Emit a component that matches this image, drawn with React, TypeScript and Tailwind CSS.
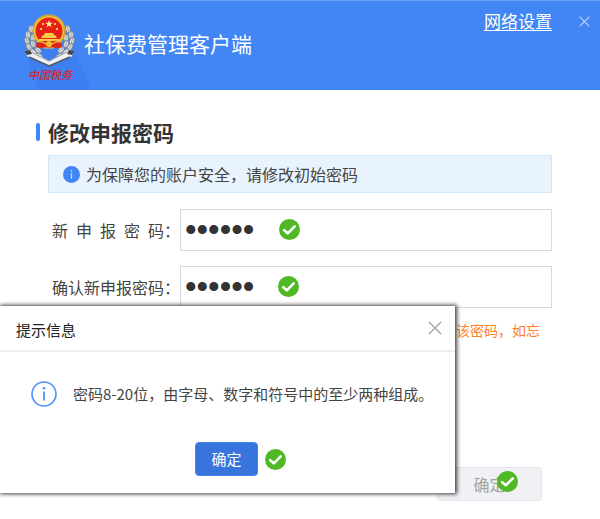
import { useState } from "react";

const laurel = [
  [11, 20, 10],
  [8, 26, -5],
  [7, 32, -20],
  [9, 38, -35],
  [13, 43, -50],
  [19, 47, -65],
  [13, 29, 0],
  [13, 35, -20],
  [18, 41, -45],
];

const fieldClass =
  "h-[42px] w-full border border-[#d6dbe2] bg-white pl-1 font-['Liberation_Sans',sans-serif] text-[33px] text-[#333333] outline-none";

export default function App() {
  const [password, setPassword] = useState("abc123");
  const [confirm, setConfirm] = useState("abc123");

  return (
    <div className="relative min-h-screen bg-white font-['Noto_Sans_CJK_SC',sans-serif] text-[#444444]">
      <header className="relative flex h-[90px] items-start justify-between border-t border-[#6a9ff5] bg-[#4285f4] text-white">
        <svg className="absolute top-0 left-0 h-full w-[100px]" viewBox="0 0 100 89" aria-hidden="true">
          <path d="M25 50 L70 42 L92 89 L38 89 Z" fill="#3d7ff0" />
        </svg>
        <div className="relative flex items-center gap-2 pt-2 pl-5">
          <Emblem />
          <h1 className="pb-1 text-[21px] leading-6">社保费管理客户端</h1>
        </div>
        <div className="relative flex items-center gap-6 pt-2 pr-2">
          <a href="#network" className="text-[17px] leading-6 underline underline-offset-2">
            网络设置
          </a>
          <button type="button" aria-label="关闭窗口" className="flex size-4 items-center justify-center text-[#c8d8f5]">
            <CloseIcon size={13} />
          </button>
        </div>
      </header>

      <main className="px-12 pt-7">
        <div className="-ml-3 flex items-center gap-2">
          <span className="h-[18px] w-1 rounded-sm bg-[#4285f4]" />
          <h2 className="text-[21px] leading-7 font-bold text-[#333333]">修改申报密码</h2>
        </div>

        <div className="mt-[9px] flex h-[38px] items-center gap-[6px] border border-[#d3e6fb] bg-[#e9f3fe] px-[14px]">
          <svg width="17" height="17" viewBox="0 0 17 17" aria-hidden="true">
            <circle cx="8.5" cy="8.5" r="8.5" fill="#4285f4" />
            <path d="M8.5 7v6M8.5 4v1.4" stroke="#c9dcfb" strokeWidth="1.2" />
          </svg>
          <p className="text-base leading-6">为保障您的账户安全，请修改初始密码</p>
        </div>

        <form className="mt-4">
          <div className="flex items-center">
            <label htmlFor="password" className="flex w-[132px] shrink-0 pl-1 text-base whitespace-nowrap">
              <span className="w-[113px] [text-align-last:justify]">新 申 报 密 码</span>：
            </label>
            <div className="relative flex-1">
              <input
                id="password"
                type="password"
                value={password}
                onChange={(e) => setPassword(e.target.value)}
                className={fieldClass}
              />
              <CheckBadge className="absolute top-[10px] left-[99px]" />
            </div>
          </div>

          <div className="mt-[15px] flex items-center">
            <label htmlFor="confirm" className="flex w-[132px] shrink-0 pl-1 text-base whitespace-nowrap">
              <span className="w-[113px] [text-align-last:justify]">确认新申报密码</span>：
            </label>
            <div className="relative flex-1">
              <input
                id="confirm"
                type="password"
                value={confirm}
                onChange={(e) => setConfirm(e.target.value)}
                className={fieldClass}
              />
              <CheckBadge className="absolute top-[10px] left-[98px]" />
            </div>
          </div>

          <p className="mt-[10px] pr-3 text-right text-sm leading-6 text-[#ff7f27]">于该密码，如忘</p>

          <div className="mt-[125px] flex justify-end pr-[10px]">
            <div className="relative">
              <button
                type="submit"
                disabled
                className="h-[34px] w-[105px] rounded-sm border border-[#e3e5ea] bg-[#eff1f5] text-base text-[#a3a3a3]"
              >
                确定
              </button>
              <CheckBadge className="absolute top-1 left-[60px]" />
            </div>
          </div>
        </form>
      </main>

      <section
        role="dialog"
        aria-labelledby="dialog-title"
        className="absolute top-[306px] left-0 w-[455px] max-w-full bg-white pb-[17px] shadow-[1px_0_4px_1px_rgba(0,0,0,0.75)]"
      >
        <div className="flex h-[46px] items-center justify-between border-b-2 border-[#efefef] pt-1 pr-3 pl-4">
          <h3 id="dialog-title" className="text-[15px] text-[#222222]">
            提示信息
          </h3>
          <button type="button" aria-label="关闭" className="mb-1 flex size-4 items-center justify-center text-[#a0a0a0]">
            <CloseIcon size={16} />
          </button>
        </div>
        <div className="flex items-center gap-4 pt-[29px] pl-[31px]">
          <svg width="26" height="26" viewBox="0 0 26 26" fill="none" aria-hidden="true">
            <circle cx="13" cy="13" r="12" stroke="#4d8ff7" strokeWidth="1.6" />
            <path d="M13 10.5v9" stroke="#4d8ff7" strokeWidth="1.8" />
            <circle cx="13" cy="7.2" r="1.3" fill="#4d8ff7" />
          </svg>
          <p className="text-[15px] whitespace-nowrap">密码8-20位，由字母、数字和符号中的至少两种组成。</p>
        </div>
        <div className="flex items-center justify-center gap-[7px] pt-[35px] pl-[26px]">
          <button
            type="button"
            className="h-[34px] w-[63px] rounded border border-[#4285f4] bg-[#3775dc] text-[15px] text-white"
          >
            确定
          </button>
          <CheckBadge />
        </div>
      </section>
    </div>
  );
}

function CloseIcon({ size }: { size: number }) {
  return (
    <svg width={size} height={size} viewBox="0 0 16 16" fill="none" stroke="currentColor" strokeWidth="1.3">
      <path d="M2 2l12 12M14 2L2 14" />
    </svg>
  );
}

function CheckBadge({ className = "" }: { className?: string }) {
  return (
    <svg className={className} width="21" height="21" viewBox="0 0 21 21" fill="none" aria-hidden="true">
      <circle cx="10.5" cy="10.5" r="10.5" fill="#4fb925" />
      <path
        d="M5.2 11.2l3.6 3.1 6.9-6.9"
        stroke="#ffffff"
        strokeWidth="2.6"
        strokeLinecap="round"
        strokeLinejoin="round"
      />
    </svg>
  );
}

// National emblem with laurel and ribbon, lettering below
function Emblem() {
  return (
    <svg width="56" height="72" viewBox="0 0 56 72" fill="none" aria-hidden="true">
      {[1, -1].map((side) => (
        <g key={side} transform={side === 1 ? undefined : "translate(59 0) scale(-1 1)"}>
          {laurel.map(([x, y, angle]) => (
            <g key={`${x}-${y}`} transform={`translate(${x} ${y}) rotate(${angle})`}>
              <ellipse rx="2.5" ry="3.8" fill="#d5d9dc" stroke="#6b7580" strokeWidth="0.7" />
              <path d="M0-3v6" stroke="#8a939c" strokeWidth="0.6" />
            </g>
          ))}
        </g>
      ))}
      <path d="M4 42l6-1 19 11 20-11 6 1-4 6-22 9L8 48z" fill="#eef0f2" />
      <path d="M4 42l6-1 2 4-5 1zM55 42l-6-1-2 4 5 1z" fill="#3f4650" />
      <path d="M9 48l20 9 21-9" stroke="#4d565f" strokeWidth="1.4" />
      <path d="M11 43l18 9 18-9" stroke="#78828c" strokeWidth="0.8" />
      <circle cx="29" cy="22" r="16.5" fill="#f0c33c" />
      <circle cx="29" cy="22" r="15.8" stroke="#c28f24" strokeWidth="0.8" />
      <circle cx="29" cy="22" r="13.5" fill="#e81f17" />
      <path d="M29 11l1 2.7h2.8l-2.2 1.7.8 2.8-2.4-1.7-2.4 1.7.8-2.8-2.2-1.7H28z" fill="#fff0a0" />
      <path d="M22 14h2v2h-2zM34 14h2v2h-2zM20 19h2v2h-2zM36 19h2v2h-2z" fill="#f8cf3a" />
      <path d="M24 26l1-2h8l1 2zM21 29l2-3h12l2 3zM19 30h20v2H19z" fill="#f7cf45" />
      <path d="M17 33c4-2 8 1 12 0s8-2 12 0l1 5c-4 2-9 0-13 1-5-1-9 1-13-1z" fill="#e0241b" />
      <circle cx="29" cy="35" r="3" fill="#efbb35" />
      <path d="M17 33c4-1 6 0 9 2M41 33c-4-1-6 0-9 2M24 39h10" stroke="#f2c53d" strokeWidth="1.2" />
      <text
        x="8"
        y="70"
        fill="#d8232b"
        fontSize="11"
        fontWeight="500"
        fontStyle="italic"
        fontFamily="'Noto Sans CJK SC', sans-serif"
      >
        中国税务
      </text>
    </svg>
  );
}
